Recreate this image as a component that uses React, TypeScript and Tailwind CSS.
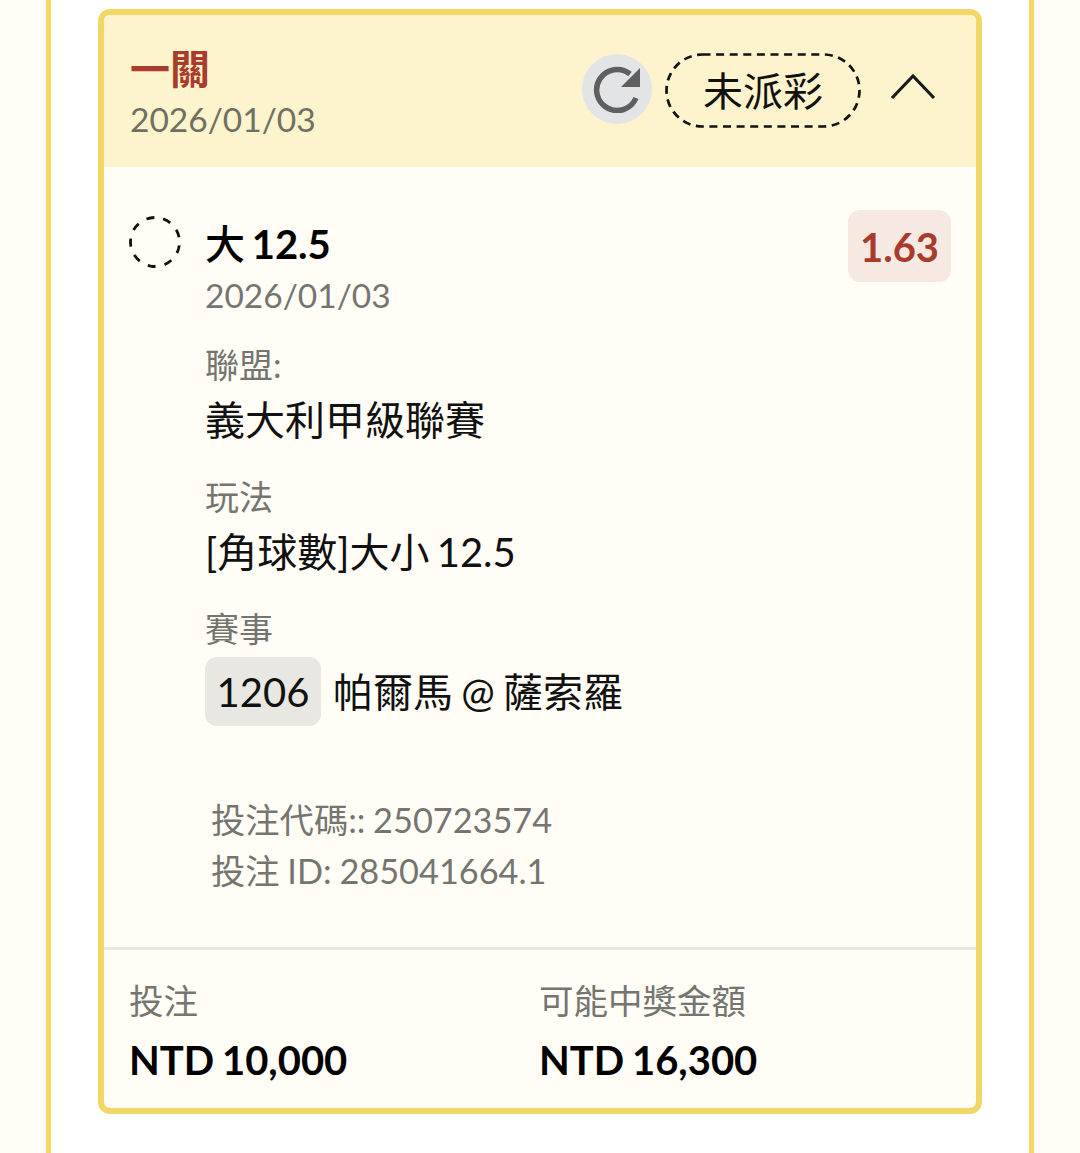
const font = "font-['Lato','Noto_Sans_CJK_TC',sans-serif]";

const DashedCircle = () => (
  <svg width="52" height="52" viewBox="0 0 52 52" className="shrink-0">
    <circle cx="26" cy="26" r="24.5" fill="none" stroke="#111" strokeWidth="2.8" strokeDasharray="8 9.1" transform="rotate(8 26 26)" />
  </svg>
);

const Info = ({ label, value, className }: { label: string; value: string; className?: string }) => (
  <div className={className}>
    <p className="text-[34px] leading-[40px] text-[#757570]">{label}</p>
    <p className="mt-[11px] text-[40px] leading-[48px] text-[#111] [word-spacing:-3px]">{value}</p>
  </div>
);

export default function App() {
  return (
    <div className={`${font} h-[1153px] overflow-hidden bg-[#fffdf6] px-[46px]`}>
      <div className="h-full border-x-[5px] border-[#f5d862] bg-white px-[47px] pt-[9px]">
        <section className="h-[1105px] overflow-hidden rounded-[12px] border-[6px] border-[#f3d766] bg-[#fffdf6]">
          {/* header */}
          <div className="flex h-[152px] items-start justify-between bg-[#fdf3cc] pl-[26px] pr-[40px]">
            <div className="pt-[30px]">
              <h2 className="text-[40px] leading-[48px] font-bold text-[#a93b2c]">一關</h2>
              <p className="mt-[2px] text-[33.5px] leading-[48px] text-[#6f6f62]">2026/01/03</p>
            </div>
            <div className="flex items-center pt-[38px]">
              <div className="mb-[4px] flex h-[70px] w-[70px] items-center justify-center rounded-full bg-[#e3e4e6]">
                <svg width="48" height="48" viewBox="0 0 48 48">
                  <path d="M43 33A20.5 20.5 0 1 1 37 9" fill="none" stroke="#5f5f5f" strokeWidth="5.5" />
                  <path d="M47 3V22H28Z" fill="#5f5f5f" />
                </svg>
              </div>
              <div className="relative ml-[13px] flex h-[75px] w-[196px] items-center justify-center text-[40px] text-[#111]">
                未派彩
                <svg width="196" height="75" viewBox="0 0 196 75" className="absolute left-0 top-0">
                  <rect x="1.5" y="1.5" width="193" height="72" rx="36" fill="none" stroke="#111" strokeWidth="2.7" strokeDasharray="8 5.6" />
                </svg>
              </div>
              <svg width="46" height="28" viewBox="0 0 46 28" className="mb-[10px] ml-[29px]">
                <path d="M2 26 23 4 44 26" fill="none" stroke="#1a1a1a" strokeWidth="3.2" />
              </svg>
            </div>
          </div>

          {/* selection */}
          <div className="h-[783px] border-b-[3px] border-[#e8e7e2] pl-[25px] pr-[25px] pt-[43px]">
            <div className="flex items-start">
              <div className="pt-[6px]">
                <DashedCircle />
              </div>
              <div className="ml-[24px] flex-1">
                <div className="flex items-start justify-between">
                  <div>
                    <p className="pt-[10px] text-[40px] leading-[48px] font-bold text-black [word-spacing:-3px]">
                      <span className="font-medium">大</span> 12.5
                    </p>
                    <p className="mt-[5px] text-[33.5px] leading-[44px] text-[#757570]">2026/01/03</p>
                  </div>
                  <div className="flex h-[72px] w-[103px] items-center justify-center rounded-[12px] bg-[#f5e9e2] pt-[1px] text-[40px] font-bold text-[#a93b2c]">
                    1.63
                  </div>
                </div>
                <Info label="聯盟:" value="義大利甲級聯賽" className="mt-[28px]" />
                <Info label="玩法" value="[角球數]大小 12.5" className="mt-[33px]" />
                <div className="mt-[33px]">
                  <p className="text-[34px] leading-[40px] text-[#757570]">賽事</p>
                  <div className="mt-[8px] flex items-center">
                    <span className="flex h-[69px] w-[116px] items-center justify-center rounded-[12px] bg-[#e8e7e2] text-[40px] text-[#111]">
                      1206
                    </span>
                    <span className="ml-[12px] text-[40px] leading-[48px] text-[#111] [word-spacing:-2px]">帕爾馬 @ 薩索羅</span>
                  </div>
                </div>
                <div className="ml-[6px] mt-[68px] text-[34.3px] leading-[51px] text-[#757570] [word-spacing:-1px]">
                  <p>投注代碼:: 250723574</p>
                  <p>投注 ID: 285041664.1</p>
                </div>
              </div>
            </div>
          </div>

          {/* totals */}
          <div className="grid grid-cols-[410px_1fr] pl-[25px] pt-[29px]">
            <div>
              <p className="text-[34.5px] leading-[44px] text-[#757570]">投注</p>
              <p className="mt-[13px] text-[40px] leading-[48px] font-bold text-black [word-spacing:-2px]">NTD 10,000</p>
            </div>
            <div>
              <p className="text-[34.5px] leading-[44px] text-[#757570]">可能中獎金額</p>
              <p className="mt-[13px] text-[40px] leading-[48px] font-bold text-black [word-spacing:-2px]">NTD 16,300</p>
            </div>
          </div>
        </section>
      </div>
    </div>
  );
}
